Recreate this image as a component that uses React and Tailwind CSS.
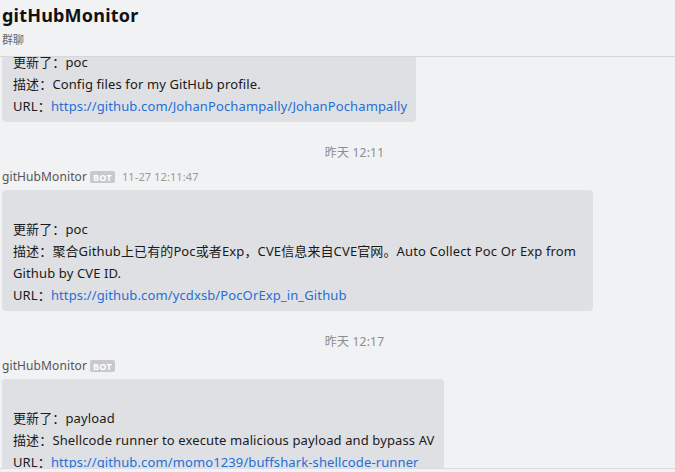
import React from "react";

const font = { fontFamily: '"Noto Sans", "Noto Sans CJK SC", sans-serif' };

function Bot() {
  return (
    <span className="ml-[3px] inline-flex h-[12px] items-center rounded-[2px] bg-[#c9c9cb] px-[3px] text-[9px] font-bold leading-none tracking-[0.3px] text-white">
      BOT
    </span>
  );
}

function Meta({ time }) {
  return (
    <div className="flex items-center px-[2px] text-[12px] leading-[16px] tracking-[0.1px] text-[#555]">
      <span>gitHubMonitor</span>
      <Bot />
      {time && <span className="ml-[7px] text-[11px] tracking-[0.1px] text-[#9a9a9a]">{time}</span>}
    </div>
  );
}

function Stamp({ children }) {
  return (
    <div className="flex justify-center pl-[34px] text-[12px] leading-[16px] tracking-[0.2px] text-[#8c8c8c]">
      {children}
    </div>
  );
}

function Bubble({ kind, desc, url }) {
  return (
    <div className="mx-[2px] max-w-[591px] self-start rounded-[4px] bg-[#dfe0e4] pl-[11px] pr-[9px] pt-[6px] pb-[5px] text-[13px] leading-[22px] tracking-[0.12px] text-[#1a1a1a]">
      <div className="h-[22px]"></div>
      <div>更新了：{kind}</div>
      <div>描述：{desc}</div>
      <div className="whitespace-nowrap">
        URL：<span className="text-[#1f6fd6]">{url}</span>
      </div>
    </div>
  );
}

export default function App() {
  return (
    <div className="flex h-[472px] w-[675px] flex-col overflow-hidden bg-[#f1f2f4]" style={font}>
      <div className="z-10 h-[57px] shrink-0 border-b border-[#d6d7da] bg-[#f1f2f4] px-[2px] pt-[3px]">
        <div className="text-[18px] font-bold leading-[24px] tracking-[0.2px] text-[#111]">gitHubMonitor</div>
        <div className="mt-[6px] text-[11px] leading-[14px] text-[#666]">群聊</div>
      </div>
      <div className="relative flex-1 overflow-hidden">
        <div className="-mt-[34px] flex flex-col">
          <Bubble
            kind="poc"
            desc="Config files for my GitHub profile."
            url="https://github.com/JohanPochampally/JohanPochampally"
          />
          <div className="mt-[23px]">
            <Stamp>昨天 12:11</Stamp>
          </div>
          <div className="mt-[8px]">
            <Meta time="11-27 12:11:47" />
          </div>
          <div className="mt-[5px] flex flex-col">
            <Bubble
              kind="poc"
              desc="聚合Github上已有的Poc或者Exp，CVE信息来自CVE官网。Auto Collect Poc Or Exp from Github by CVE ID."
              url="https://github.com/ycdxsb/PocOrExp_in_Github"
            />
          </div>
          <div className="mt-[23px]">
            <Stamp>昨天 12:17</Stamp>
          </div>
          <div className="mt-[8px]">
            <Meta />
          </div>
          <div className="mt-[5px] flex flex-col">
            <Bubble
              kind="payload"
              desc="Shellcode runner to execute malicious payload and bypass AV"
              url="https://github.com/momo1239/buffshark-shellcode-runner"
            />
          </div>
        </div>
        <div className="absolute bottom-0 left-0 right-0 h-[4px] border-t border-[#dcdde0] bg-[#f1f2f4]"></div>
      </div>
    </div>
  );
}
